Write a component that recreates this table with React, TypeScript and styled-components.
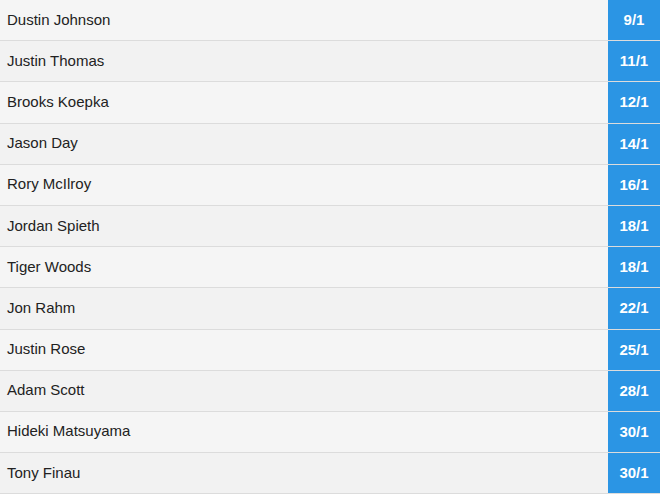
import React from "react";
import styled, { createGlobalStyle } from "styled-components";

interface Golfer {
  name: string;
  odds: string;
}

const golfers: Golfer[] = [
  { name: "Dustin Johnson", odds: "9/1" },
  { name: "Justin Thomas", odds: "11/1" },
  { name: "Brooks Koepka", odds: "12/1" },
  { name: "Jason Day", odds: "14/1" },
  { name: "Rory McIlroy", odds: "16/1" },
  { name: "Jordan Spieth", odds: "18/1" },
  { name: "Tiger Woods", odds: "18/1" },
  { name: "Jon Rahm", odds: "22/1" },
  { name: "Justin Rose", odds: "25/1" },
  { name: "Adam Scott", odds: "28/1" },
  { name: "Hideki Matsuyama", odds: "30/1" },
  { name: "Tony Finau", odds: "30/1" },
];

const GlobalStyle = createGlobalStyle`
  html, body {
    margin: 0;
    padding: 0;
    background: #ffffff;
  }
  body {
    font-family: "Liberation Sans", Arial, sans-serif;
  }
`;

const OddsList = styled.ul`
  list-style: none;
  margin: 0;
  padding: 0;
  width: 660px;
`;

const Row = styled.li<{ $alt: boolean }>`
  display: flex;
  height: 40.2px;
  border-bottom: 1px solid #dcdcdc;
  background: ${(p) => (p.$alt ? "#f2f2f2" : "#f5f5f5")};
`;

const Name = styled.span`
  flex: 1;
  display: flex;
  align-items: center;
  padding-left: 7px;
  padding-bottom: 2px;
  font-size: 15px;
  color: #222222;
`;

const Odds = styled.span`
  width: 52px;
  display: flex;
  align-items: center;
  justify-content: center;
  background: #2b95e4;
  color: #ffffff;
  font-size: 15px;
  font-weight: bold;
  padding-bottom: 1px;
`;

const App: React.FC = () => {
  return (
    <>
      <GlobalStyle />
      <OddsList>
        {golfers.map((g, i) => (
          <Row key={g.name} $alt={i % 2 === 1}>
            <Name>{g.name}</Name>
            <Odds>{g.odds}</Odds>
          </Row>
        ))}
      </OddsList>
    </>
  );
};

export default App;
